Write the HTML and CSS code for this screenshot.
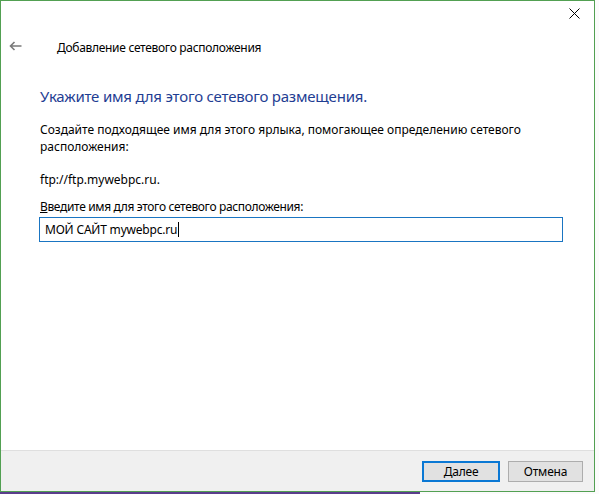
FILE: index.html
```html
<!DOCTYPE html>
<html lang="ru">

<head>
  <meta charset="UTF-8">
  <title>Добавление сетевого расположения</title>
  <link rel="stylesheet" href="styles.css">
</head>

<body>
  <div class="window">
    <div class="titlebar">
      <button class="close-btn" title="Закрыть">
        <svg width="11" height="11" viewBox="0 0 11 11">
          <path d="M0.5 0.5L10.5 10.5M10.5 0.5L0.5 10.5" stroke="#000" stroke-width="1" />
        </svg>
      </button>
    </div>
    <div class="wizard-nav">
      <button class="back-btn">
        <svg width="13" height="10" viewBox="0 0 13 10">
          <path d="M12.5 5H1.5M5.5 1L1.5 5L5.5 9" stroke="#7a7a7a" stroke-width="1.6" fill="none" />
        </svg>
      </button>
      <span class="wizard-title">Добавление сетевого расположения</span>
    </div>
    <div class="wizard-body">
      <h1 class="main-instruction">Укажите имя для этого сетевого размещения.</h1>
      <p class="desc">Создайте подходящее имя для этого ярлыка, помогающее определению сетевого расположения:</p>
      <p class="address">ftp://ftp.mywebpc.ru.</p>
      <label class="field-label" for="name"><u>В</u>ведите имя для этого сетевого расположения:</label>
      <div class="field">
        <span class="field-value">МОЙ САЙТ mywebpc.ru</span><span class="caret"></span>
      </div>
    </div>
    <div class="wizard-footer">
      <button class="btn btn-default"><u>Д</u>алее</button>
      <button class="btn">Отмена</button>
    </div>
  </div>
  <div class="taskbar"></div>
</body>

</html>
```
FILE: styles.css
```css
  body {
    margin: 0;
    background: #fbfbfb;
    font-family: "Noto Sans", "Open Sans", Arial, sans-serif;
    font-size: 12px;
    color: #000;
  }

  .window {
    width: 595px;
    height: 492px;
    box-sizing: border-box;
    border: 1px solid #52a052;
    background: #fff;
    display: flex;
    flex-direction: column;
  }

  .titlebar {
    height: 30px;
    display: flex;
    justify-content: flex-end;
  }

  .close-btn {
    width: 34px;
    height: 30px;
    border: none;
    background: transparent;
    padding: 0 0 4px 0;
    margin-right: 3px;
  }

  .wizard-nav {
    display: flex;
    align-items: center;
    height: 30px;
  }

  .back-btn {
    width: 38px;
    height: 30px;
    padding: 0 0 0 8px;
    text-align: left;
    border: none;
    background: transparent;
  }

  .wizard-title {
    margin-left: 18px;
    margin-top: 2px;
    font-size: 12px;
    letter-spacing: -0.3px;
  }

  .wizard-body {
    padding: 0 31px 0 39px;
  }

  .main-instruction {
    margin: 24px 0 0;
    font-size: 15px;
    font-weight: normal;
    color: #1f3e93;
    line-height: 22px;
    letter-spacing: -0.2px;
  }

  .desc {
    margin: 14px 0 0;
    line-height: 17px;
  }

  .address {
    margin: 16px 0 0;
    line-height: 17px;
  }

  .field-label {
    display: block;
    margin-top: 10px;
    line-height: 17px;
    letter-spacing: -0.35px;
  }

  .field {
    margin: 2px 0 0 -1px;
    height: 25px;
    box-sizing: border-box;
    border: 1px solid #1a75c2;
    display: flex;
    align-items: center;
    padding-left: 5px;
  }

  .field-value {
    letter-spacing: -0.2px;
  }

  .caret {
    display: inline-block;
    width: 1px;
    height: 15px;
    background: #000;
    margin-left: 1px;
  }

  .wizard-footer {
    margin-top: auto;
    height: 40px;
    border-top: 1px solid #dfdfdf;
    background: #f0f0f0;
    display: flex;
    justify-content: flex-end;
    align-items: center;
    gap: 8px;
    padding-right: 11px;
  }

  .btn {
    width: 75px;
    height: 21px;
    box-sizing: border-box;
    border: 1px solid #adadad;
    background: #e1e1e1;
    font-family: inherit;
    font-size: 12px;
    letter-spacing: -0.2px;
    padding: 0;
  }

  .btn-default {
    width: 78px;
    border: 2px solid #0a78d4;
  }

  .btn u {
    text-decoration: underline;
  }

  .taskbar {
    height: 2px;
    width: 420px;
    background: #5a3d8c;
  }
```
